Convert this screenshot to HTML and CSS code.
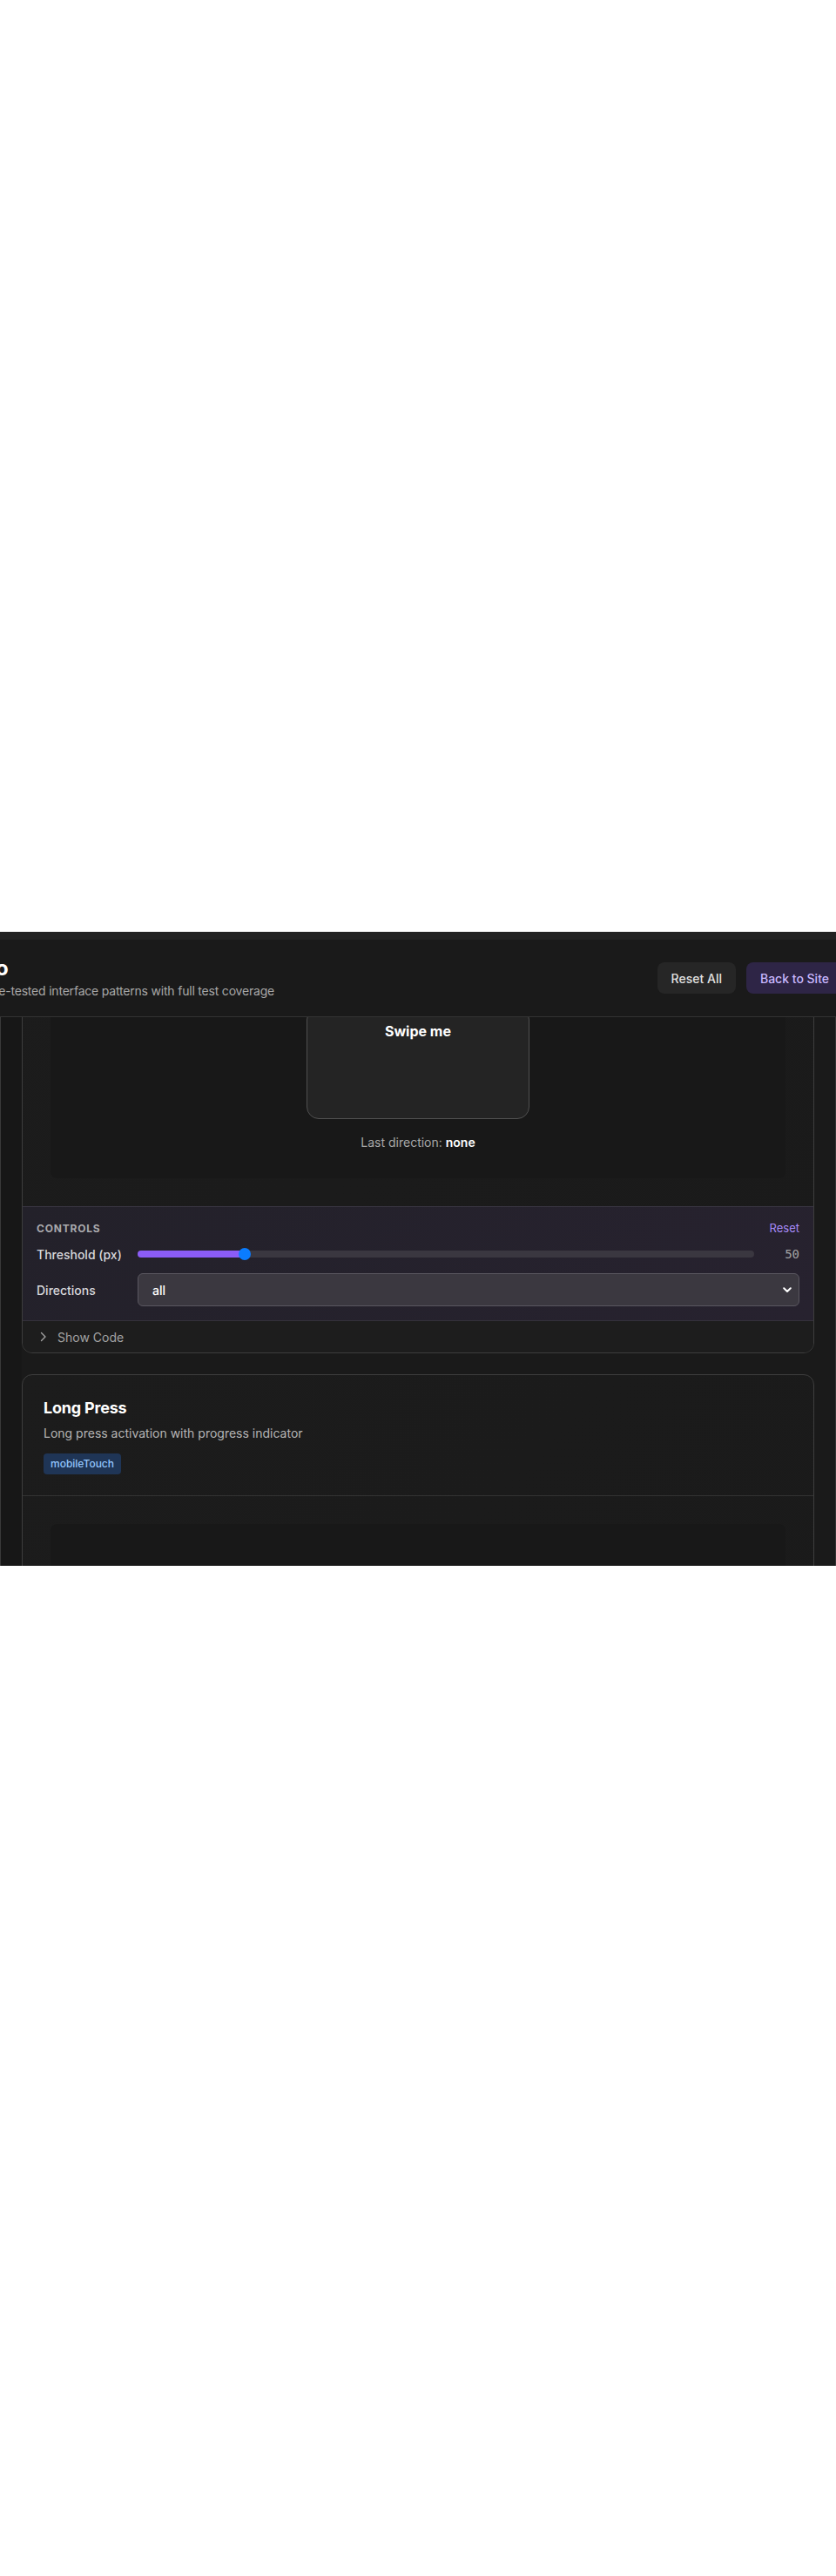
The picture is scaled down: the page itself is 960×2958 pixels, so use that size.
FILE: index.html
```html
<!DOCTYPE html>
<html lang="en">
<head>
<meta charset="utf-8">
<title>Demo</title>
<link rel="stylesheet" href="styles.css">
</head>
<body>
<div class="page">
  <div class="frame">
    <header class="topbar">
      <div class="strip"></div>
      <div class="bar">
        <div class="brand">
          <h1 class="title">Demo</h1>
          <p class="subtitle">Battle-tested interface patterns with full test coverage</p>
        </div>
        <div class="actions">
          <button class="btn btn-ghost">Reset All</button>
          <button class="btn btn-accent">Back to Site</button>
        </div>
      </div>
    </header>
    <main class="viewport">
      <div class="scroller">
        <section class="card">
          <div class="card-head">
            <h2 class="card-title">Swipe Gestures</h2>
            <p class="card-desc">Detect swipe direction with configurable threshold</p>
            <span class="tag">mobileTouch</span>
          </div>
          <div class="card-body">
            <div class="demo">
              <div class="swipe-box"><span>Swipe me</span></div>
              <p class="status">Last direction: <strong>none</strong></p>
            </div>
          </div>
          <div class="controls">
            <div class="controls-head">
              <span class="controls-label">Controls</span>
              <span class="controls-reset">Reset</span>
            </div>
            <div class="control-row">
              <span class="control-name">Threshold (px)</span>
              <div class="slider">
                <div class="slider-fill" style="width: 17.4%"><span class="slider-thumb"></span></div>
              </div>
              <span class="control-value">50</span>
            </div>
            <div class="control-row">
              <span class="control-name">Directions</span>
              <div class="select">
                <span>all</span>
                <svg class="chev-down" width="10" height="7" viewBox="0 0 10 7"><path d="M1.2 1.3 L5 5 L8.8 1.3" fill="none" stroke="#fff" stroke-width="2" stroke-linecap="round" stroke-linejoin="round"/></svg>
              </div>
            </div>
          </div>
          <div class="code-toggle">
            <svg width="8" height="12" viewBox="0 0 8 12"><path d="M1.5 1.5 L6 6 L1.5 10.5" fill="none" stroke="#a3a3a3" stroke-width="1.4" stroke-linecap="round" stroke-linejoin="round"/></svg>
            <span>Show Code</span>
          </div>
        </section>
        <section class="card">
          <div class="card-head">
            <h2 class="card-title">Long Press</h2>
            <p class="card-desc">Long press activation with progress indicator</p>
            <span class="tag">mobileTouch</span>
          </div>
          <div class="card-body">
            <div class="demo demo-tall"></div>
          </div>
        </section>
      </div>
    </main>
  </div>
</div>
</body>
</html>
```
FILE: styles.css
```css
* { box-sizing: border-box; }
html, body { margin: 0; padding: 0; background: #fff; }
body { font-family: Inter, "Noto Sans", "Liberation Sans", sans-serif; }
.page { width: 960px; height: 2958px; padding-top: 1070px; background: #fff; }
.frame {
  width: 960px; height: 728px; overflow: hidden;
  display: flex; flex-direction: column;
  background: #1a1a1a;
}
.topbar { flex: none; background: #1a1a1a; position: relative; z-index: 2; }
.strip { height: 9px; background: #222222; }
.bar {
  height: 89px; border-bottom: 1px solid #333333;
  display: flex; align-items: center; justify-content: space-between;
}
.brand { margin-left: -30px; padding-bottom: 1px; }
.title {
  margin: 0 0 2px -28px; font-size: 24px; line-height: 28px; font-weight: 700; color: #ffffff;
  letter-spacing: -0.2px;
}
.subtitle { margin: 0; font-size: 14px; line-height: 20px; color: #a8a8a8; white-space: nowrap; letter-spacing: -0.2px; }
.actions { display: flex; gap: 12px; margin-right: -8px; }
.btn {
  font-family: inherit; font-size: 14px; font-weight: 500; height: 36px; padding: 0 16px;
  border: none; border-radius: 8px; white-space: nowrap;
}
.btn-ghost { background: #262626; color: #e0e0e0; }
.btn-accent { background: #2e2546; color: #c9b8ff; }

.viewport {
  flex: 1; overflow: hidden; position: relative;
  border-left: 1px solid #3a3a3a; border-right: 1px solid #333;
  background: linear-gradient(90deg, #171717 0, #171717 24px, #1a1a1a 24px);
}
.scroller { margin-top: -215px; padding: 0 24px; display: flex; flex-direction: column; gap: 24px; }
.card {
  border: 1px solid #3d3d3d; border-radius: 12px; overflow: hidden;
  background: linear-gradient(135deg, #1c1c1c, #1a1a1a);
}
.card-head { height: 139px; padding: 24px 24px 0; border-bottom: 1px solid #333333; }
.card-title { margin: 0; font-size: 18px; line-height: 28px; font-weight: 700; color: #ffffff; letter-spacing: -0.2px; }
.card-desc { margin: 5px 0 0; font-size: 14px; line-height: 20px; color: #b5b5b5; }
.tag {
  display: inline-block; margin-top: 13px; height: 24px; line-height: 24px; padding: 0 8px;
  border-radius: 4px; background: #1f3556; color: #93c5fd; font-size: 12px; font-weight: 500;
}
.card-body { padding: 32px; }
.demo {
  background: #181818; border-radius: 8px; padding: 32px 0 31px;
  display: flex; flex-direction: column; align-items: center;
}
.demo-tall { height: 240px; }
.swipe-box {
  width: 256px; height: 128px; border: 1.5px solid #505050; border-radius: 14px;
  background: #242424; display: flex; justify-content: center; padding-top: 14px;
  color: #fff; font-size: 16px; line-height: 24px; font-weight: 700;
}
.status { margin: 17px 0 0; font-size: 14px; line-height: 20px; color: #a8a8a8; }
.status strong { color: #ffffff; font-weight: 600; }

.controls {
  border-top: 1px solid #373440; border-bottom: 1px solid #34313b;
  background: linear-gradient(135deg, #23212a, #27222f);
  padding: 16px; display: flex; flex-direction: column; gap: 12px;
}
.controls-head { display: flex; justify-content: space-between; align-items: center; height: 16px; }
.controls-label { font-size: 12px; font-weight: 700; letter-spacing: 0.8px; text-transform: uppercase; color: #a9a9ad; }
.controls-reset { font-size: 13px; color: #a78bfa; }
.control-row { display: flex; align-items: center; gap: 16px; }
.control-name { width: 100px; flex: none; font-size: 14px; font-weight: 500; color: #d8d8dc; white-space: nowrap; }
.slider { flex: 1; height: 8px; border-radius: 4px; background: #3a3740; position: relative; margin-right: -4px; }
.slider-fill { height: 100%; border-radius: 4px; background: #8b5cf6; position: relative; }
.slider-thumb {
  position: absolute; right: -7px; top: 50%; width: 14px; height: 14px; margin-top: -7px;
  border-radius: 50%; background: #0a7cff;
}
.control-value {
  width: 40px; flex: none; text-align: right; font-family: "DejaVu Sans Mono", "Liberation Mono", monospace;
  font-size: 14px; color: #a3a3a3; line-height: 20px;
}
.select {
  flex: 1; height: 38px; border: 1px solid #5a5760; border-radius: 6px; background: #3b3840;
  display: flex; align-items: center; justify-content: space-between; padding: 0 8px 0 16px;
  color: #ffffff; font-size: 14px; font-weight: 500;
}
.code-toggle {
  height: 36px; display: flex; align-items: center; gap: 12px; padding: 0 20px;
  background: #1d1d1d; color: #a3a3a3; font-size: 14px;
}
```
